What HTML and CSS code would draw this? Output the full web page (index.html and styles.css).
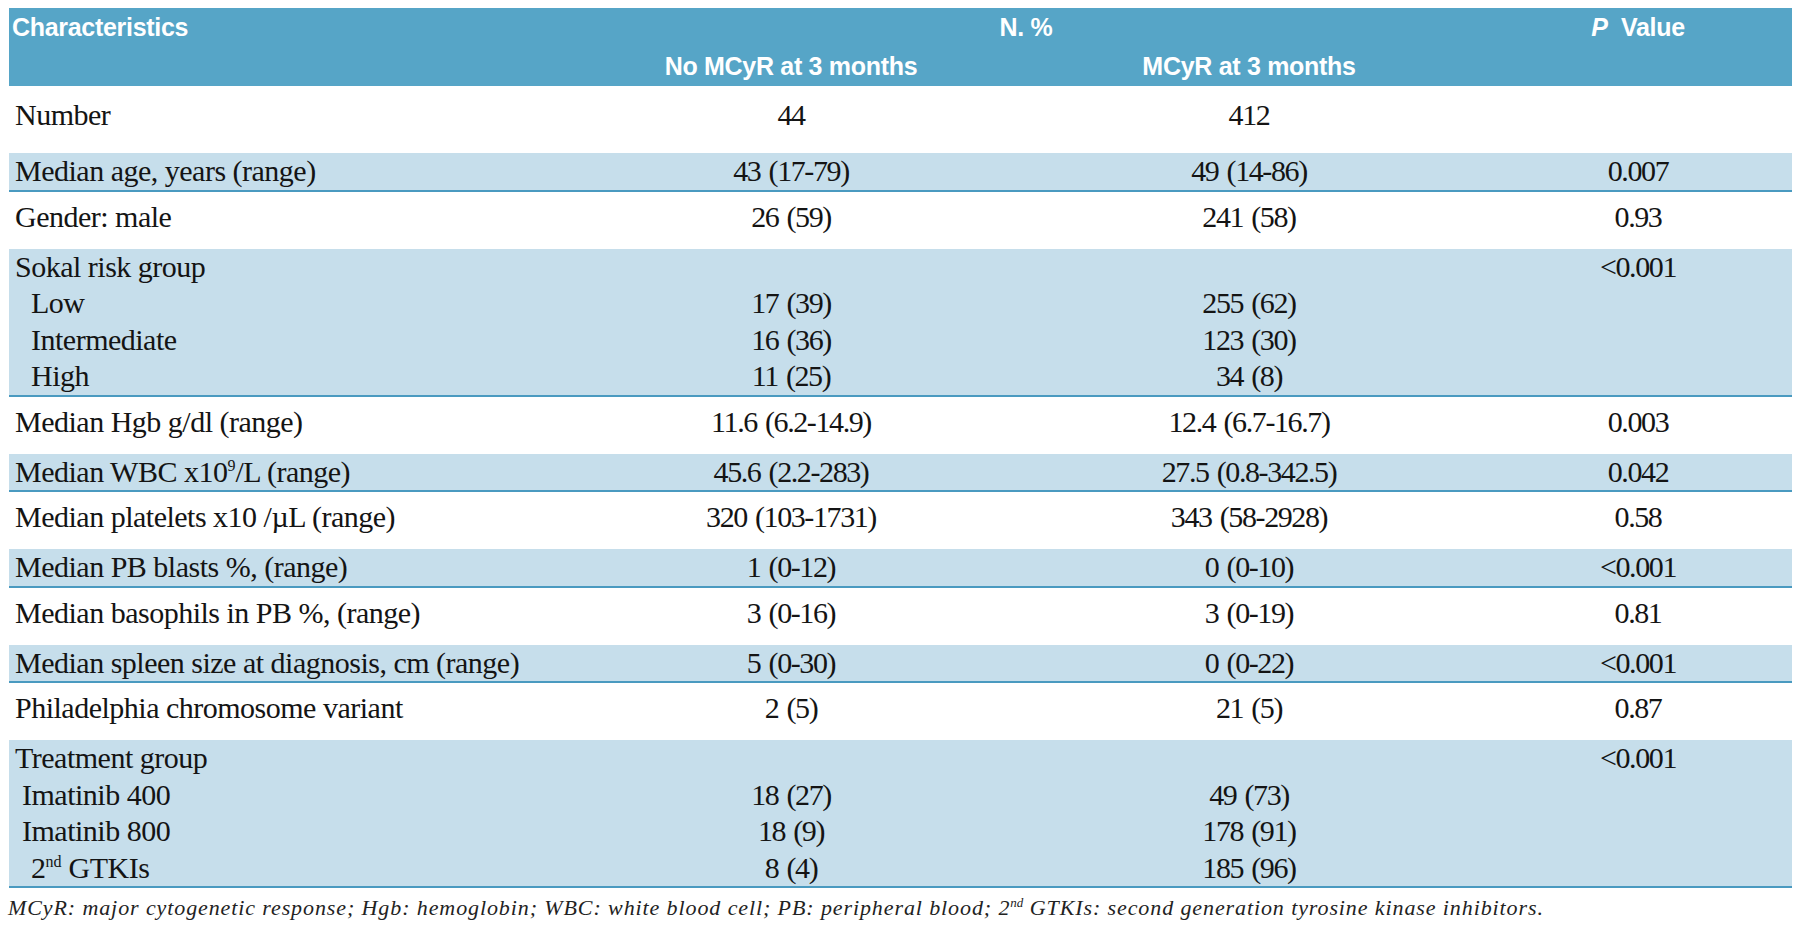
FILE: index.html
```html
<!DOCTYPE html>
<html lang="en">
<head>
<meta charset="utf-8">
<title>Characteristics table</title>
<link rel="stylesheet" href="styles.css">
</head>
<body>
<div class="page">
<table class="tbl">
<colgroup><col class="c1"><col class="c2"><col class="c3"><col class="c4"></colgroup>
<thead>
<tr class="hr1"><th class="hl">Characteristics</th><th colspan="2">N. %</th><th><i>P</i>&nbsp; Value</th></tr>
<tr class="hr2"><th class="hl"></th><th>No MCyR at 3 months</th><th>MCyR at 3 months</th><th></th></tr>
</thead>
<tbody>
<tr class="w first"><td>Number</td><td class="n">44</td><td class="n">412</td><td class="n"></td></tr>
<tr class="b"><td>Median age, years (range)</td><td class="n">43 (17-79)</td><td class="n">49 (14-86)</td><td class="n">0.007</td></tr>
<tr class="w"><td>Gender: male</td><td class="n">26 (59)</td><td class="n">241 (58)</td><td class="n">0.93</td></tr>
<tr class="b"><td>Sokal risk group<br><span class="i2">Low</span><br><span class="i2">Intermediate</span><br><span class="i2">High</span></td><td class="n"><br>17 (39)<br>16 (36)<br>11 (25)</td><td class="n"><br>255 (62)<br>123 (30)<br>34 (8)</td><td class="n">&lt;0.001</td></tr>
<tr class="w"><td>Median Hgb g/dl (range)</td><td class="n">11.6 (6.2-14.9)</td><td class="n">12.4 (6.7-16.7)</td><td class="n">0.003</td></tr>
<tr class="b"><td>Median WBC x10<sup>9</sup>/L (range)</td><td class="n">45.6 (2.2-283)</td><td class="n">27.5 (0.8-342.5)</td><td class="n">0.042</td></tr>
<tr class="w"><td>Median platelets x10 /µL (range)</td><td class="n">320 (103-1731)</td><td class="n">343 (58-2928)</td><td class="n">0.58</td></tr>
<tr class="b"><td>Median PB blasts %, (range)</td><td class="n">1 (0-12)</td><td class="n">0 (0-10)</td><td class="n">&lt;0.001</td></tr>
<tr class="w"><td>Median basophils in PB %, (range)</td><td class="n">3 (0-16)</td><td class="n">3 (0-19)</td><td class="n">0.81</td></tr>
<tr class="b"><td>Median spleen size at diagnosis, cm (range)</td><td class="n">5 (0-30)</td><td class="n">0 (0-22)</td><td class="n">&lt;0.001</td></tr>
<tr class="w"><td>Philadelphia chromosome variant</td><td class="n">2 (5)</td><td class="n">21 (5)</td><td class="n">0.87</td></tr>
<tr class="b"><td>Treatment group<br><span class="i1">Imatinib 400</span><br><span class="i1">Imatinib 800</span><br><span class="i2">2<sup>nd</sup> GTKIs</span></td><td class="n"><br>18 (27)<br>18 (9)<br>8 (4)</td><td class="n"><br>49 (73)<br>178 (91)<br>185 (96)</td><td class="n">&lt;0.001</td></tr>
</tbody>
</table>
<p class="note">MCyR: major cytogenetic response; Hgb: hemoglobin; WBC: white blood cell; PB: peripheral blood; 2<sup>nd</sup> GTKIs: second generation tyrosine kinase inhibitors.</p>
</div>
</body>
</html>
```
FILE: styles.css
```css
html, body {
  margin: 0;
  padding: 0;
  background: #ffffff;
}

.page {
  padding: 8px 8px 0 9px;
}

.tbl {
  width: 1783px;
  table-layout: fixed;
  border-collapse: collapse;
  border-spacing: 0;
}

.c1 { width: 559px; }
.c2 { width: 446px; }
.c3 { width: 470px; }
.c4 { width: 308px; }

.tbl thead th {
  background: #56a5c7;
  color: #ffffff;
  font-family: "Liberation Sans", Arial, sans-serif;
  font-weight: bold;
  font-size: 25px;
  line-height: 39px;
  height: 39px;
  padding: 0 3px;
  text-align: center;
  vertical-align: top;
  letter-spacing: -0.3px;
  white-space: nowrap;
}

.tbl thead th.hl {
  text-align: left;
}

.tbl thead th i {
  font-style: italic;
}

.tbl td {
  font-family: "Liberation Serif", "Times New Roman", serif;
  font-size: 30px;
  color: #141414;
  letter-spacing: -0.5px;
  vertical-align: top;
  padding: 0 6px;
  white-space: nowrap;
}

.tbl td.n {
  text-align: center;
  letter-spacing: -1.4px;
  word-spacing: 2px;
}

.tbl tr.b td {
  background: #c6deeb;
  line-height: 36.5px;
  border-bottom: 2px solid #4a9ac0;
}

.tbl tr.w td {
  line-height: 36.5px;
  padding-top: 7px;
  padding-bottom: 13.5px;
}

.tbl tr.w.first td {
  padding-top: 11px;
  padding-bottom: 19.5px;
}

.i1 { padding-left: 7px; }
.i2 { padding-left: 16px; }

.tbl sup {
  font-size: 16px;
  line-height: 0;
  vertical-align: 11px;
  letter-spacing: 0;
}

.note {
  margin: 7px 0 0 -1px;
  font-family: "Liberation Serif", "Times New Roman", serif;
  font-style: italic;
  font-size: 22px;
  line-height: 26px;
  letter-spacing: 0.9px;
  color: #222222;
  white-space: nowrap;
}

.note sup {
  font-size: 13px;
  line-height: 0;
  vertical-align: 8px;
  letter-spacing: 0;
}
```
